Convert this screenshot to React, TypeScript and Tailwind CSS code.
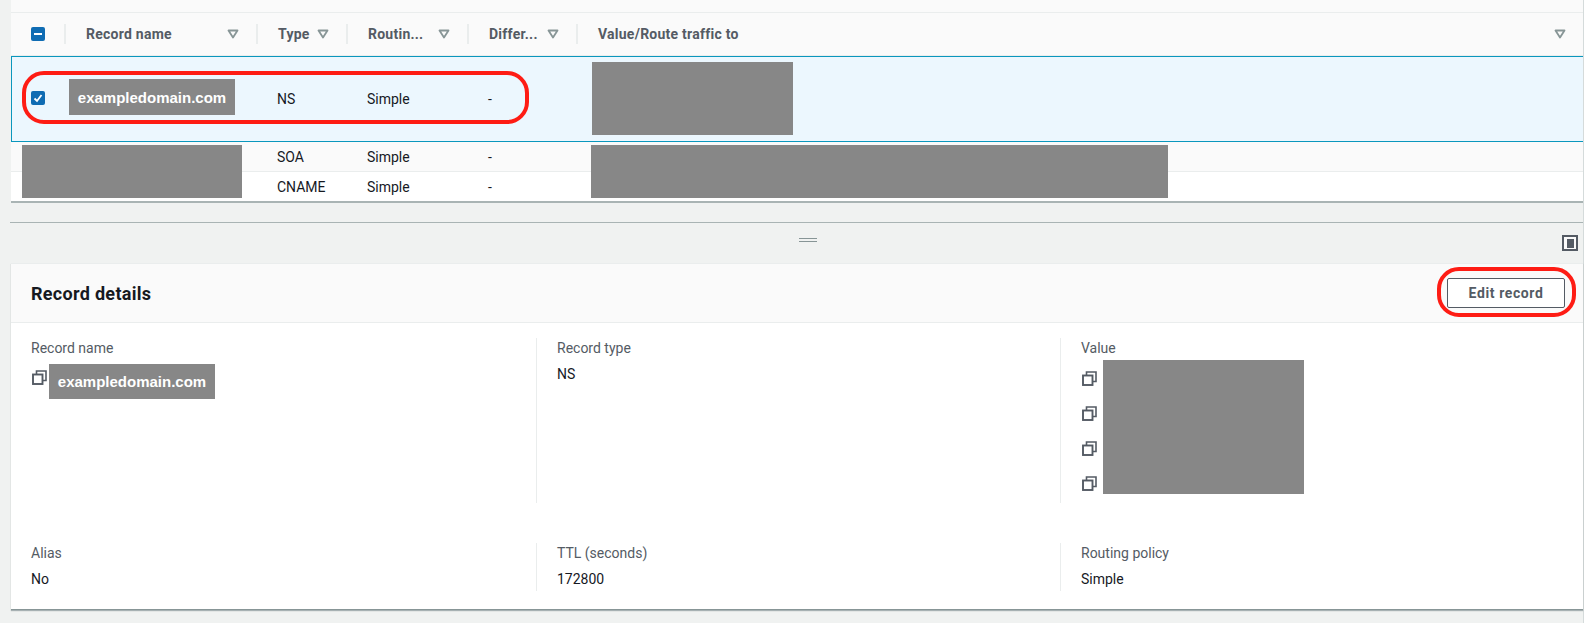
const columns = "grid grid-cols-[53px_192px_90px_121px_109px_1fr]";

function FilterArrow() {
  return (
    <svg width="12" height="12" viewBox="0 0 12 12" fill="none" className="shrink-0">
      <path d="M1.5 2.5h9L6 9.5z" stroke="#879596" strokeWidth="1.8" strokeLinejoin="round" />
    </svg>
  );
}

function CopyIcon() {
  return (
    <svg width="15" height="15" viewBox="0 0 15 15" fill="none" className="shrink-0">
      <rect x="1" y="4.5" width="9.5" height="9.5" stroke="#545b64" strokeWidth="1.9" />
      <path d="M4.5 4V1H14v9.5h-3" stroke="#545b64" strokeWidth="1.6" />
    </svg>
  );
}

function HeaderCell({ label }: { label: string }) {
  return (
    <div className="flex h-[20px] items-center justify-between border-l-2 border-[#eaeded] pl-[20px] pr-[17px]">
      <span className="text-[14px] font-bold tracking-[0.25px] text-[#545b64]">{label}</span>
      <FilterArrow />
    </div>
  );
}

function Redacted({ className, label }: { className: string; label?: string }) {
  return (
    <div className={`flex items-center justify-center bg-[#878787] font-['Liberation_Sans',sans-serif] text-[15px] font-bold text-white ${className}`}>
      {label}
    </div>
  );
}

function Row({ type, className }: { type: string; className: string }) {
  return (
    <div className={`${columns} items-center text-[14px] text-[#16191f] ${className}`}>
      <div />
      <div />
      <div className="pl-[21px]">{type}</div>
      <div className="pl-[21px]">Simple</div>
      <div className="pl-[21px]">-</div>
      <div />
    </div>
  );
}

function Field({ label, value, className }: { label: string; value: string; className?: string }) {
  return (
    <div className={`h-[48px] ${className ?? ""}`}>
      <div className="text-[14px] leading-[20px] text-[#545b64]">{label}</div>
      <div className="mt-[6px] text-[14px] leading-[20px] text-[#16191f]">{value}</div>
    </div>
  );
}

export default function App() {
  return (
    <div className="flex h-[623px] overflow-hidden bg-white font-['Roboto',sans-serif]">
      <div className="h-full w-[1584px] shrink-0 border-r border-[#d5dbdb] bg-[#f0f2f1] pl-[11px]">
        <section className="relative border-b-2 border-[#a9b4b4] bg-white">
          <div className="h-[13px] border-b border-[#eaeded] bg-[#fafafa]" />
          <div className={`${columns} h-[43px] items-center border-b border-[#eaeded] bg-[#fafafa]`}>
            <div className="pl-[20px]">
              <div className="flex h-[14px] w-[14px] items-center justify-center rounded-[2px] bg-[#0f6cb3]">
                <div className="h-[2px] w-[8px] bg-white" />
              </div>
            </div>
            <HeaderCell label="Record name" />
            <HeaderCell label="Type" />
            <HeaderCell label="Routin..." />
            <HeaderCell label="Differ..." />
            <HeaderCell label="Value/Route traffic to" />
          </div>
          <div className={`${columns} h-[86px] items-center border-y border-[#0a97bd] bg-[#ecf7fe] text-[14px] text-[#16191f] shadow-[inset_1px_0_0_#0a97bd]`}>
            <div className="-mt-[2px] pl-[20px]">
              <div className="flex h-[14px] w-[14px] items-center justify-center rounded-[2px] bg-[#0f6cb3]">
                <svg width="10" height="10" viewBox="0 0 10 10" fill="none">
                  <path d="M1.5 5.5 4 8l4.5-6" stroke="white" strokeWidth="1.8" />
                </svg>
              </div>
            </div>
            <div className="relative">
              <Redacted className="absolute left-[5px] top-[-20px] h-[36px] w-[166px] pt-[3px]" label="exampledomain.com" />
            </div>
            <div className="pl-[21px]">NS</div>
            <div className="pl-[21px]">Simple</div>
            <div className="pl-[21px]">-</div>
            <div className="pl-[16px]">
              <Redacted className="mb-[2px] h-[73px] w-[201px]" />
            </div>
          </div>
          <Row type="SOA" className="h-[30px] border-b border-[#eaeded] bg-[#fafafa] pt-[2px]" />
          <Row type="CNAME" className="h-[29px] pt-[1px]" />
          <Redacted className="absolute left-[11px] top-[145px] h-[53px] w-[220px]" />
          <Redacted className="absolute left-[580px] top-[145px] h-[53px] w-[577px]" />
          <div className="absolute left-[11px] top-[71px] h-[53px] w-[507px] rounded-[22px] border-[4px] border-[#fe1c14]" />
        </section>

        <div className="-ml-[1px] mt-[19px] h-[41px] border-t border-[#a9b4b4]">
          <div className="relative h-full">
            <div className="absolute left-[789px] top-[15px] h-[4px] w-[18px] border-y border-[#879596]" />
            <div className="absolute left-[1552px] top-[12px] flex h-[16px] w-[16px] items-center justify-center border-2 border-[#545b64] bg-[#fafafa]">
              <div className="h-[9px] w-[7px] bg-[#545b64]" />
            </div>
          </div>
        </div>

        <section className="relative h-[347px] border-b border-[#879596] bg-white shadow-[0_1px_1px_rgba(0,28,36,0.3)]">
          <header className="flex h-[60px] items-center justify-between border-y border-[#eaeded] bg-[#fafafa] pl-[20px] pr-[18px]">
            <h2 className="text-[18px] font-bold tracking-[0.3px] text-[#16191f]">Record details</h2>
            <button className="h-[30px] w-[118px] rounded-[2px] border border-[#545b64] bg-white text-[14px] font-bold tracking-[0.6px] text-[#545b64]">
              Edit record
            </button>
          </header>
          <div className="grid grid-cols-[525px_524px_1fr] pt-[15px]">
            <div className="h-[165px] pl-[20px]">
              <div className="text-[14px] leading-[20px] text-[#545b64]">Record name</div>
              <div className="mt-[6px] flex items-start gap-[2px]">
                <div className="pl-[1px] pt-[6px]"><CopyIcon /></div>
                <Redacted className="h-[35px] w-[166px] pt-[1px]" label="exampledomain.com" />
              </div>
            </div>
            <div className="h-[165px] border-l border-[#eaeded] pl-[20px]">
              <Field label="Record type" value="NS" />
            </div>
            <div className="h-[165px] border-l border-[#eaeded] pl-[20px]">
              <div className="text-[14px] leading-[20px] text-[#545b64]">Value</div>
              <div className="flex gap-[6px]">
                <div className="flex flex-col gap-[20px] pl-[1px] pt-[13px]">
                  <CopyIcon />
                  <CopyIcon />
                  <CopyIcon />
                  <CopyIcon />
                </div>
                <Redacted className="mt-[2px] h-[134px] w-[201px]" />
              </div>
            </div>
          </div>
          <div className="mt-[40px] grid grid-cols-[525px_524px_1fr]">
            <Field label="Alias" value="No" className="pl-[20px]" />
            <Field label="TTL (seconds)" value="172800" className="border-l border-[#eaeded] pl-[20px]" />
            <Field label="Routing policy" value="Simple" className="border-l border-[#eaeded] pl-[20px]" />
          </div>
          <div className="absolute left-[1426px] top-[4px] h-[50px] w-[139px] rounded-[22px] border-[4px] border-[#fe1c14]" />
        </section>
      </div>
    </div>
  );
}
